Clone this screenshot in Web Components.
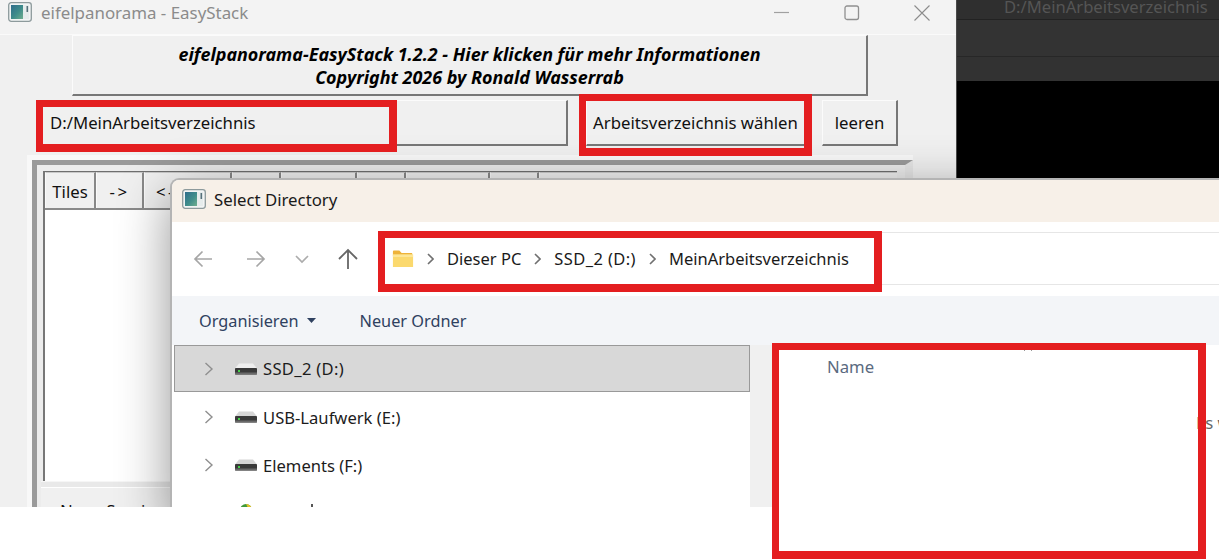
<!DOCTYPE html>
<html lang="de"><head><meta charset="utf-8"><title>EasyStack</title>
<style>html,body{margin:0;background:#fff;font-family:"Noto Sans","Open Sans",sans-serif}</style>
</head><body>
<shot-page>
  <desk-top>
    <main-window>
      <win-title slot="title" label="eifelpanorama - EasyStack"></win-title>
      <qt-button slot="about" about>eifelpanorama-EasyStack 1.2.2 - Hier klicken für mehr Informationen<br>Copyright 2026 by Ronald Wasserrab</qt-button>
      <qt-button slot="path" field>D:/MeinArbeitsverzeichnis</qt-button>
      <qt-button slot="choose" style="width:220px">Arbeitsverzeichnis wählen</qt-button>
      <qt-button slot="clear" style="width:76px">leeren</qt-button>
      <tab-frame slot="tabs"></tab-frame>
    </main-window>
    <dark-window>D:/MeinArbeitsverzeichnis</dark-window>
    <folder-dialog></folder-dialog>
  </desk-top>
  <red-mark style="left:36px;top:100px;width:361px;height:52px"></red-mark>
  <red-mark style="left:579px;top:94px;width:233px;height:62px"></red-mark>
  <red-mark style="left:378px;top:231px;width:504px;height:61px"></red-mark>
  <red-mark style="left:772px;top:343px;width:434px;height:216px"></red-mark>
</shot-page>
<script>
const def=(name,html,init)=>customElements.define(name,class extends HTMLElement{
  constructor(){super();this.attachShadow({mode:'open'}).innerHTML=typeof html==='function'?html(this):html}
  connectedCallback(){if(typeof html==='function')this.shadowRoot.innerHTML=html(this);init&&init(this)}
});
const appIcon=`<svg class="i" width="24" height="20" viewBox="0 0 24 20"><defs><linearGradient id="g" x1="0" y1="0" x2="1" y2="1"><stop offset="0" stop-color="#2f6d8c"/><stop offset=".55" stop-color="#3f8d8b"/><stop offset="1" stop-color="#6fae8f"/></linearGradient></defs><rect x=".7" y=".7" width="22.6" height="18.6" rx="2.5" fill="#f2f4f4" stroke="#8d9a9c" stroke-width="1.3"/><rect x="3" y="3" width="12" height="14" fill="url(#g)"/><rect x="15" y="3" width="6" height="14" fill="#e6ecec"/><rect x="18.5" y="4" width="1.6" height="6" fill="#56707a"/></svg>`;

def('shot-page',`<style>:host{display:block;position:relative;width:1219px;height:560px;overflow:hidden;background:#fff}</style><slot></slot>`);
def('desk-top',`<style>:host{display:block;position:relative;width:1219px;height:507px;overflow:hidden;background:#f0f0f0}</style><slot></slot>`);
def('red-mark',`<style>:host{display:block;position:absolute;box-sizing:border-box;border:solid #e41e20;border-width:7px 8px 8px 7px;pointer-events:none}</style>`);

def('main-window',`<style>
:host{display:flex;flex-direction:column;position:absolute;left:0;top:0;width:956px;height:507px;overflow:hidden;background:#f0f0f0}
.about{display:block;margin:0 88px 0 72px}
.row{display:flex;margin:4px 58px 0 40px;height:46px;gap:16px}
.grow{flex:1;display:flex;margin-right:2px}
.tabs{margin-top:9px;display:block}
</style><slot name="title"></slot><div class="about"><slot name="about"></slot></div>
<div class="row"><div class="grow"><slot name="path"></slot></div><slot name="choose"></slot><slot name="clear"></slot></div>
<div class="tabs"><slot name="tabs"></slot></div>`);

def('win-title',el=>`<style>
:host{display:flex;height:35px;background:#f3f3f3;box-sizing:border-box;border-bottom:1px solid #fafafa;position:relative;font-size:16.9px;color:#8b8b8b}
svg.i{margin:2px 0 0 8px;flex:none}
.t{margin:0 0 0 9px;line-height:26px;white-space:nowrap}
.ctl{margin-left:auto;display:flex;margin-right:26px;gap:54px;align-items:flex-start;padding-top:5px}
</style>${appIcon}<span class="t">${el.getAttribute('label')||''}</span>
<div class="ctl">
<svg width="16" height="16" viewBox="0 0 16 16"><path d="M0 7.5H15" stroke="#a0a0a0" stroke-width="1.2"/></svg>
<svg width="16" height="16" viewBox="0 0 16 16"><rect x="1" y="1" width="13.5" height="13.5" rx="2" fill="none" stroke="#909090" stroke-width="1.3"/></svg>
<svg width="16" height="16" viewBox="0 0 16 16"><path d="M.5.5L15.5 15.5M15.5.5L.5 15.5" stroke="#8c8c8c" stroke-width="1.1"/></svg>
</div>`);

def('qt-button',`<style>
:host{display:flex;align-items:center;justify-content:center;box-sizing:border-box;height:46px;background:#f0f0f0;border:solid;border-width:1px 2px 2px 1px;border-color:#fbfbfb #777 #777 #fbfbfb;font-size:16.75px;color:#111;white-space:nowrap}
:host([field]){flex:1;justify-content:flex-start;padding-left:9px}
:host([about]){height:61px;text-align:center;font-weight:700;font-style:italic;color:#000;line-height:23.5px;padding-top:2px;font-size:17.92px}
</style><span><slot></slot></span>`);

def('tab-frame',`<style>
:host{display:block;margin-left:27px;width:886px;height:352px;box-sizing:border-box;padding:5px 0 0 5px;background:#f8f8f8}
.bevel{box-sizing:border-box;height:100%;border:solid;border-width:5px 8px 0 5px;border-color:#9a9a9a #e6e6e6 #e6e6e6 #9a9a9a;background:#ececec;padding:6px 8px 0 6px}
.panel{border-top:1px solid #6f6f6f;border-left:2px solid #777;display:flex;flex-direction:column}
.bar{display:flex;height:36px;border-bottom:2px solid #8a8a8a;background:#e9e9e9}
.tab{box-sizing:border-box;border-right:2px solid #888;border-left:1px solid #fafafa;border-top:1px solid #c9c9c9;background:#f0f0f0;font-size:16.75px;color:#111;display:flex;align-items:center;justify-content:center;flex:none;padding-top:1px}
.wide{letter-spacing:2.5px}
.body{height:271px;background:#fff}
.gap{height:5px;margin-left:-2px;background:#e9e9e9;border-top:1px solid #f6f6f6}
.session{margin-left:-2px;height:80px;background:#f0f0f0;border-top:1px solid #fff;padding:11px 0 0 19px;font-size:16.75px;color:#111;box-sizing:border-box}
</style><div class="bevel"><div class="panel">
<div class="bar"><div class="tab" style="width:51px">Tiles</div><div class="tab wide" style="width:48px">-&gt;</div><div class="tab wide" style="width:88px;justify-content:flex-start;padding-left:11px">&lt;-</div>
<div class="tab" style="width:49px"></div><div class="tab" style="width:76px"></div><div class="tab" style="width:49px"></div><div class="tab" style="width:84px"></div><div class="tab" style="width:49px"></div><div class="tab" style="flex:1;border-right:0"></div></div>
<div class="body"></div></div><div class="gap"></div><div class="session">Neue Session</div></div>`);

def('dark-window',`<style>
:host{display:flex;flex-direction:column;position:absolute;left:956px;top:0;width:263px;height:178px;box-sizing:border-box;border-left:1px solid #4a4a4a;background:#000;font-size:16.6px;color:#555}
.a{height:20px;background:#2f2f2f;border-bottom:1px solid #222;box-sizing:border-box;padding-left:47px;line-height:14px;white-space:nowrap}
.b{height:37px;background:#333;border-bottom:1px solid #272727;box-sizing:border-box}
.c{height:24px;background:#323232}
</style><div class="a"><slot></slot></div><div class="b"></div><div class="c"></div>`);

def('nav-row',el=>{
 const d=el.hasAttribute('cloud');
 return `<style>
:host{display:flex;flex:none;align-items:center;box-sizing:border-box;height:48px;padding-left:30px;font-size:16.6px;color:#1c1c1c;white-space:nowrap}
:host([selected]){height:47px;margin-bottom:1px;background:#d8d8d8;border:1px solid #999;padding-left:29px;letter-spacing:.3px}
.ch{width:31px;flex:none}
.dr{width:22px;height:14px;margin-right:6px;flex:none}
.cl{margin-top:-21px}
.tick{width:2px;height:4px;margin:-14px 0 0 48px;background:#555;flex:none}
</style><svg class="ch" width="10" height="14" viewBox="0 0 31 14" style="visibility:${d?'hidden':'visible'}"><path d="M1.5 1L8 7L1.5 13" fill="none" stroke="#8f8f8f" stroke-width="1.4"/></svg>
${d?`<svg class="dr cl" viewBox="0 0 22 14"><path d="M5 14a6 6 0 0 1 12 0z" fill="#3f9a3a"/><path d="M11 8a6 6 0 0 1 6 6h-3z" fill="#e7c229"/></svg><div class="tick"></div>`:
`<svg class="dr" viewBox="0 0 22 14"><path d="M4 1.500h14l4 5H0z" fill="${el.hasAttribute('selected')?'#efefef':'#d6d6d6'}"/><rect y="6" width="22" height="6.500" rx=".8" fill="#3a3a3a"/><rect y="10.500" width="22" height="2" fill="#6a6a6a"/><rect x="3" y="8" width="2" height="2" fill="#46d04a"/></svg>`}
<span><slot></slot></span>`});

def('folder-dialog',`<style>
:host{display:flex;flex-direction:column;position:absolute;left:170px;top:178px;width:1060px;height:340px;box-sizing:border-box;border:2px solid #b4b4b4;border-right:0;border-radius:9px 0 0 0;background:#fff;box-shadow:0 14px 52px rgba(0,0,0,.42);font-size:16.5px}
.title{display:flex;align-items:center;height:42px;background:#f7f0e8;border-radius:7px 0 0 0;flex:none;color:#1a1a1a;padding:0 0 4px 10px;box-sizing:border-box;gap:8px;font-size:16.8px}
.nav{display:flex;align-items:center;height:74px;flex:none;background:#fff;position:relative}
.nav svg{flex:none}
.addr{display:flex;align-items:center;margin-left:27px;flex:1;height:53px;box-sizing:border-box;border:solid #e6e6e6;border-width:1px 0;margin-top:-1px;padding-left:6px;color:#1a1a1a;white-space:nowrap}
.sep{margin:0 13px;flex:none}
.ssd{letter-spacing:.4px}
.cmd{display:flex;align-items:center;height:49px;flex:none;background:#f3f5f8;color:#2f4160;padding-left:27px;white-space:nowrap;font-size:16.3px}
.caret{margin:0 44px 0 8px;flex:none}
.main{display:flex;flex:1;min-height:0}
.tree{width:578px;flex:none;padding-left:2px;box-sizing:border-box;background:#fff;display:flex;flex-direction:column}
.strip{width:22px;flex:none;background:#f0f0f0}
.list{flex:1;position:relative;background:#fff;color:#5a6a80;font-size:16.7px}
.name{padding:10px 0 0 55px;line-height:24px}
.sort{position:absolute;left:251px;top:1px}
.empty{position:absolute;left:424px;top:66px;color:#666;white-space:nowrap}
</style>
<div class="title">${appIcon}<span>Select Directory</span></div>
<div class="nav">
<svg style="margin-left:21px" width="20" height="20" viewBox="0 0 20 20"><path d="M19 10H2M9.500 2.500L2 10L9.500 17.500" fill="none" stroke="#a6a6a6" stroke-width="1.7"/></svg>
<svg style="margin-left:33px" width="20" height="20" viewBox="0 0 20 20"><path d="M1 10H18M10.500 2.500L18 10L10.500 17.500" fill="none" stroke="#a6a6a6" stroke-width="1.700"/></svg>
<svg style="margin-left:28px" width="16" height="12" viewBox="0 0 16 12"><path d="M2 3L8 9L14 3" fill="none" stroke="#acacac" stroke-width="1.700"/></svg>
<svg style="margin-left:27px" width="22" height="22" viewBox="0 0 22 22"><path d="M11 21V2M2 11L11 2L20 11" fill="none" stroke="#666" stroke-width="1.800"/></svg>
<div class="addr">
<svg width="22" height="18" viewBox="0 0 24 18" preserveAspectRatio="none"><path d="M1 1.500A1 1 0 0 1 2 .5H8l2.500 2.500H22v3H1z" fill="#eeb33a"/><path d="M1 4.500H23V17H1z" fill="#fbd96e"/><path d="M1 4.500H23V7H1z" fill="#fde697"/></svg>
<svg class="sep" width="7" height="12" viewBox="0 0 7 12"><path d="M1 1L6 6L1 11" fill="none" stroke="#707070" stroke-width="1.600"/></svg>
<span>Dieser PC</span>
<svg class="sep" width="7" height="12" viewBox="0 0 7 12"><path d="M1 1L6 6L1 11" fill="none" stroke="#707070" stroke-width="1.600"/></svg>
<span class="ssd">SSD_2 (D:)</span>
<svg class="sep" width="7" height="12" viewBox="0 0 7 12"><path d="M1 1L6 6L1 11" fill="none" stroke="#707070" stroke-width="1.600"/></svg>
<span>MeinArbeitsverzeichnis</span>
</div></div>
<div class="cmd"><span>Organisieren</span><svg class="caret" width="9" height="5" viewBox="0 0 9 5"><path d="M0 0H9L4.500 5z" fill="#2f4160"/></svg><span>Neuer Ordner</span></div>
<div class="main">
<div class="tree"><nav-row selected>SSD_2 (D:)</nav-row><nav-row>USB-Laufwerk (E:)</nav-row><nav-row>Elements (F:)</nav-row><nav-row cloud></nav-row></div>
<div class="strip"></div>
<div class="list"><svg class="sort" width="10" height="6" viewBox="0 0 10 6"><path d="M1 5L5 1L9 5" fill="none" stroke="#999"/></svg><div class="name">Name</div><div class="empty">Es wurden keine Suchergebnisse gefunden.</div></div>
</div>`);
</script>
</body></html>
